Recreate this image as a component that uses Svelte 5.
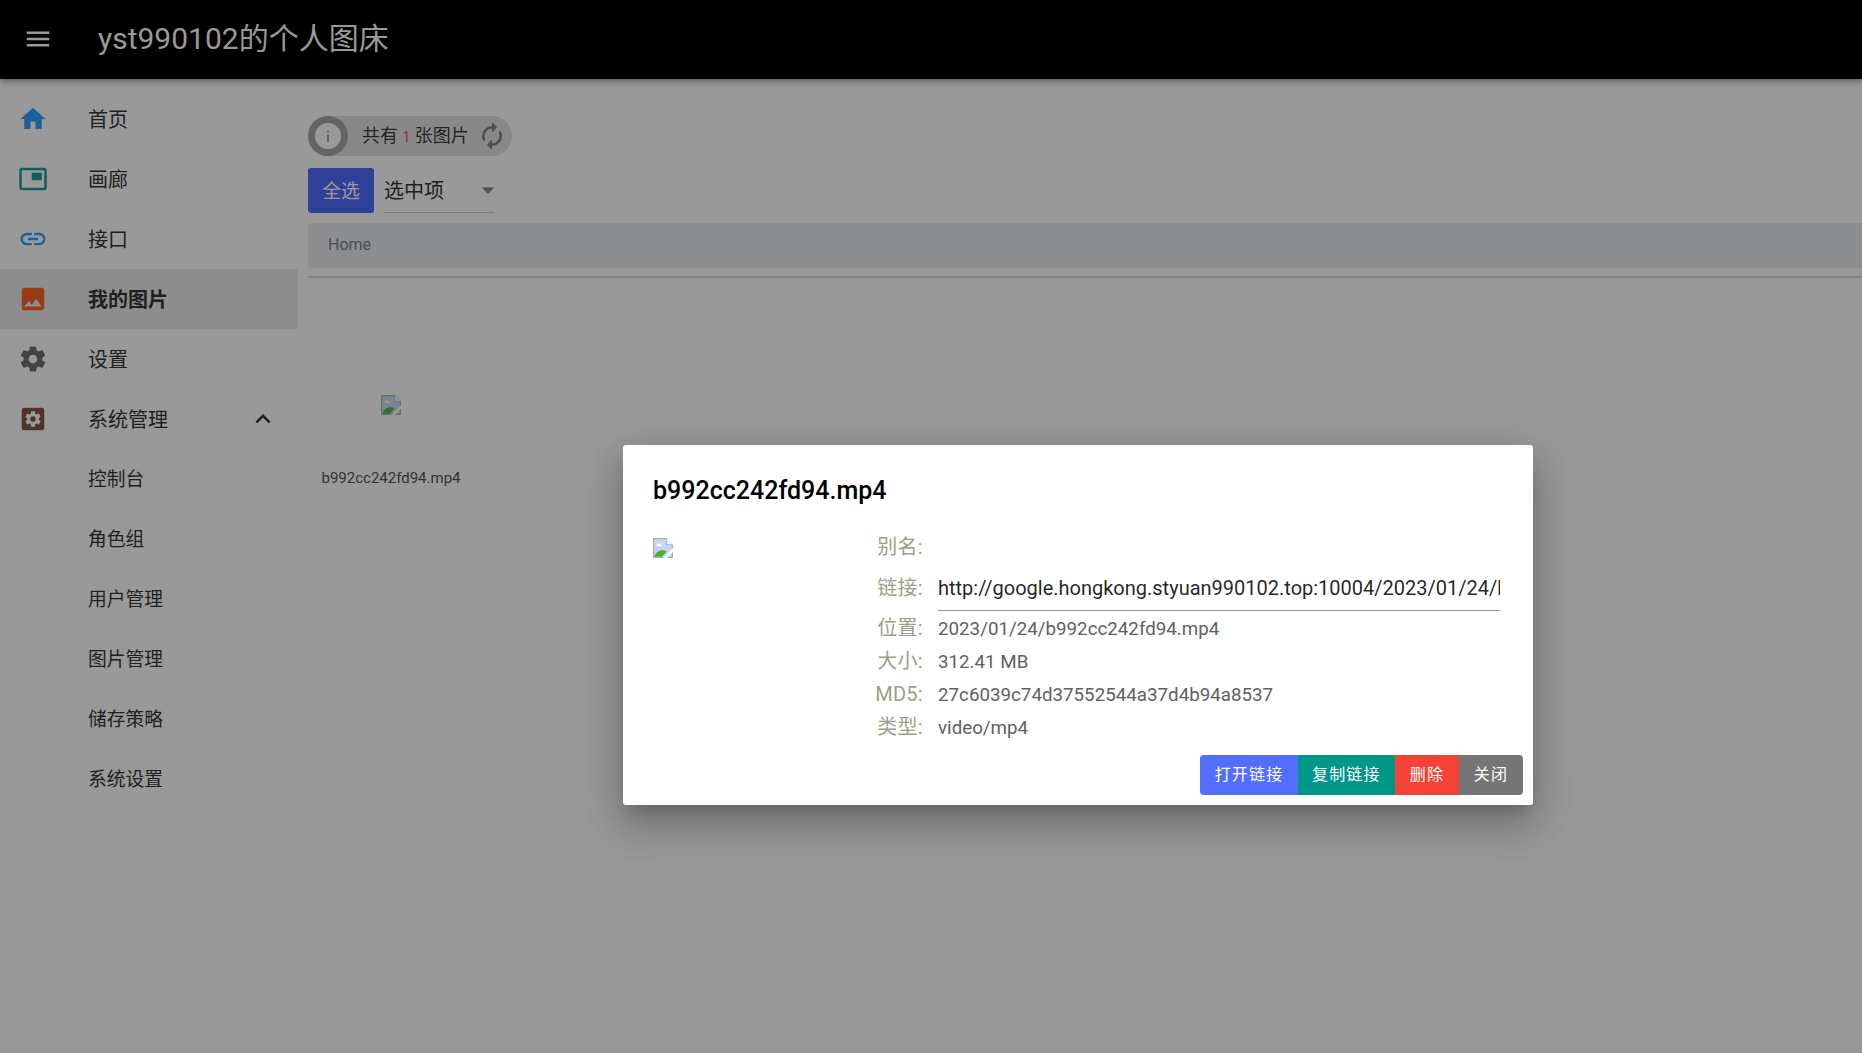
<script>
  const cog = "M12,15.5A3.5,3.5 0 0,1 8.5,12A3.5,3.5 0 0,1 12,8.5A3.5,3.5 0 0,1 15.5,12A3.5,3.5 0 0,1 12,15.5M19.43,12.97C19.47,12.65 19.5,12.33 19.5,12C19.5,11.67 19.47,11.34 19.43,11L21.54,9.37C21.73,9.22 21.78,8.95 21.66,8.73L19.66,5.27C19.54,5.05 19.27,4.96 19.05,5.05L16.56,6.05C16.04,5.66 15.5,5.32 14.87,5.07L14.5,2.42C14.46,2.18 14.25,2 14,2H10C9.75,2 9.54,2.18 9.5,2.42L9.13,5.07C8.5,5.32 7.96,5.66 7.44,6.05L4.95,5.05C4.73,4.96 4.46,5.05 4.34,5.27L2.34,8.73C2.21,8.95 2.27,9.22 2.46,9.37L4.57,11C4.53,11.34 4.5,11.67 4.5,12C4.5,12.33 4.53,12.65 4.57,12.97L2.46,14.63C2.27,14.78 2.21,15.05 2.34,15.27L4.34,18.73C4.46,18.95 4.73,19.03 4.95,18.95L7.44,17.94C7.96,18.34 8.5,18.68 9.13,18.93L9.5,21.58C9.54,21.82 9.75,22 10,22H14C14.25,22 14.46,21.82 14.5,21.58L14.87,18.93C15.5,18.67 16.04,18.34 16.56,17.94L19.05,18.95C19.27,19.03 19.54,18.95 19.66,18.73L21.66,15.27C21.78,15.05 21.73,14.78 21.54,14.63L19.43,12.97Z";
  const menu = [
    { label: "首页", color: "#1a96ff", d: "M10,20V14H14V20H19V12H22L12,3L2,12H5V20H10Z" },
    { label: "画廊", color: "#009688", d: "M19 7h-8v6h8V7zm2-4H3c-1.1 0-2 .9-2 2v14c0 1.1.9 1.98 2 1.98h18c1.1 0 2-.88 2-1.98V5c0-1.1-.9-2-2-2zm0 16.01H3V4.98h18v14.03z" },
    { label: "接口", color: "#1a96ff", d: "M3.9,12C3.9,10.29 5.29,8.9 7,8.9H11V7H7A5,5 0 0,0 2,12A5,5 0 0,0 7,17H11V15.1H7C5.29,15.1 3.9,13.71 3.9,12M8,13H16V11H8V13M17,7H13V8.9H17C18.71,8.9 20.1,10.29 20.1,12C20.1,13.71 18.71,15.1 17,15.1H13V17H17A5,5 0 0,0 22,12A5,5 0 0,0 17,7Z" },
    { label: "我的图片", color: "#ff5210", active: true, d: "M8.5,13.5L11,16.5L14.5,12L19,18H5M21,19V5C21,3.89 20.1,3 19,3H5A2,2 0 0,0 3,5V19A2,2 0 0,0 5,21H19A2,2 0 0,0 21,19Z" },
    { label: "设置", color: "#616161", d: cog }
  ];
  const subs = ["控制台", "角色组", "用户管理", "图片管理", "储存策略", "系统设置"];
  const rows = [
    ["位置", "2023/01/24/b992cc242fd94.mp4"],
    ["大小", "312.41 MB"],
    ["MD5", "27c6039c74d37552544a37d4b94a8537"],
    ["类型", "video/mp4"]
  ];
  const url = "http://google.hongkong.styuan990102.top:10004/2023/01/24/b992cc242fd94.mp4";
</script>

{#snippet broken()}
  <svg class="broken" viewBox="0 0 16 16" width="20" height="20" aria-hidden="true">
    <path d="M0 0H11L16 5V16H0Z" fill="#a9adb5" />
    <path d="M1 1H10.5V5.5H15V15H1Z" fill="#c5d6f4" />
    <path d="M3 5.5c.6-1.2 2.4-1.4 3.2-.4 1 0 1.4.8 1 1.2H3z" fill="#fff" />
    <path d="M1 15c1-3.4 4-5.4 7-5.2 1.4.1 2.2.4 3 .9L7 15z" fill="#4caf2f" />
    <path d="M16 8L8 16H11L16 11Z" fill="#fff" />
    <path d="M11 0L16 5H11Z" fill="#eef1f6" />
  </svg>
{/snippet}

<div class="page">
  <header class="bar">
    <svg class="bar-menu" viewBox="0 0 24 24" width="30" height="30" aria-hidden="true"><path fill="#999" d="M3,6H21V8H3V6M3,11H21V13H3V11M3,16H21V18H3V16Z" /></svg>
    <div class="bar-title">yst990102的个人图床</div>
  </header>

  <div class="shell">
    <nav class="nav">
      {#each menu as m}
        <div class="item" class:active={m.active}>
          <svg viewBox="0 0 24 24" width="30" height="30" aria-hidden="true"><path fill={m.color} d={m.d} /></svg>
          <span>{m.label}</span>
        </div>
      {/each}
      <div class="item">
        <svg viewBox="0 0 24 24" width="30" height="30" aria-hidden="true">
          <rect x="3" y="3" width="18" height="18" rx="2" fill="#7a4037" />
          <path fill="#fff" transform="translate(12 12) scale(.62) translate(-12 -12)" d={cog} />
        </svg>
        <span>系统管理</span>
        <svg class="chev" viewBox="0 0 24 24" width="30" height="30" aria-hidden="true"><path fill="#212121" d="M7.41,15.41L12,10.83L16.59,15.41L18,14L12,8L6,14L7.41,15.41Z" /></svg>
      </div>
      <div class="subs">
        {#each subs as s}
          <div class="item sub"><span>{s}</span></div>
        {/each}
      </div>
    </nav>

    <main class="main">
      <div class="chip">
        <span class="avatar">
          <svg viewBox="0 0 26 26" width="26" height="26" aria-hidden="true">
            <circle cx="13" cy="13" r="13" fill="#fff" />
            <rect x="12" y="11.5" width="2" height="7.5" fill="#9e9e9e" />
            <rect x="12" y="7.6" width="2" height="2" fill="#9e9e9e" />
          </svg>
        </span>
        <span class="chip-text">共有 <em>1</em> 张图片</span>
        <svg class="sync" viewBox="0 0 24 24" width="30" height="30" aria-hidden="true"><path fill="#757575" d="M12,6V9L16,5L12,1V4A8,8 0 0,0 4,12C4,13.57 4.46,15.03 5.24,16.26L6.7,14.8C6.25,13.97 6,13 6,12A6,6 0 0,1 12,6M18.76,7.74L17.3,9.2C17.74,10.04 18,11 18,12A6,6 0 0,1 12,18V15L8,19L12,23V20A8,8 0 0,0 20,12C20,10.43 19.54,8.97 18.76,7.74Z" /></svg>
      </div>

      <div class="actions-row">
        <button class="all">全选</button>
        <div class="select">
          <span>选中项</span>
          <svg viewBox="0 0 24 24" width="30" height="30" aria-hidden="true"><path fill="#757575" d="M7,10L12,15L17,10H7Z" /></svg>
        </div>
      </div>

      <div class="crumb">Home</div>
      <div class="rule"></div>

      <div class="file">
        <div class="thumb">{@render broken()}</div>
        <div class="fname">b992cc242fd94.mp4</div>
      </div>
    </main>
  </div>

  <div class="overlay"></div>

  <div class="dialog">
    <div class="d-title">b992cc242fd94.mp4</div>
    <div class="d-body">
      <div class="d-image">{@render broken()}</div>
      <div class="d-info">
        <div class="row first"><span class="lab">别名:</span><span class="val"></span></div>
        <div class="row link">
          <span class="lab">链接:</span>
          <input class="url" readonly value={url} />
        </div>
        {#each rows as r}
          <div class="row"><span class="lab">{r[0]}:</span><span class="val">{r[1]}</span></div>
        {/each}
      </div>
    </div>
    <div class="d-actions">
      <button class="b-open">打开链接</button>
      <button class="b-copy">复制链接</button>
      <button class="b-del">删除</button>
      <button class="b-close">关闭</button>
    </div>
  </div>
</div>

<style>
  :global(body) {
    margin: 0;
    background: #fff;
  }
  .page {
    position: relative;
    width: 1862px;
    height: 1053px;
    overflow: hidden;
    background: #fff;
    font-family: Roboto, "Noto Sans CJK SC", sans-serif;
    color: rgba(0, 0, 0, 0.87);
  }
  .bar {
    position: relative;
    z-index: 5;
    height: 79px;
    background: #000;
    display: flex;
    align-items: center;
    box-sizing: border-box;
    padding-left: 23px;
    box-shadow: 0 2px 4px -1px rgba(0, 0, 0, 0.2), 0 4px 5px 0 rgba(0, 0, 0, 0.14), 0 1px 10px 0 rgba(0, 0, 0, 0.12);
  }
  .bar-menu {
    margin-bottom: 2px;
  }
  .bar-title {
    margin-left: 45px;
    margin-bottom: 2px;
    color: #999;
    font-size: 30px;
    line-height: 40px;
    white-space: nowrap;
  }
  .shell {
    display: flex;
  }
  .nav {
    width: 298px;
    flex: none;
    padding-top: 10px;
  }
  .item {
    display: flex;
    align-items: center;
    height: 60px;
    padding-left: 18px;
    font-size: 20px;
    position: relative;
    color: #212121;
  }
  .item span {
    margin-left: 40px;
    padding-bottom: 2px;
  }
  .item.active {
    background: #e9e9e9;
    font-weight: 700;
  }
  .chev {
    margin-left: auto;
    margin-right: 20px;
  }
  .subs {
    margin-top: -1px;
  }
  .sub {
    padding-left: 88px;
    font-size: 18.75px;
  }
  .sub span {
    margin-left: 0;
    padding-bottom: 2px;
  }
  .main {
    flex: 1;
    min-width: 0;
    padding: 37px 0 0 10px;
  }
  .chip {
    display: flex;
    align-items: center;
    width: 204px;
    height: 40px;
    border-radius: 20px;
    background: #e0e0e0;
    position: relative;
  }
  .avatar {
    width: 40px;
    height: 40px;
    border-radius: 50%;
    background: #9e9e9e;
    display: flex;
    align-items: center;
    justify-content: center;
    flex: none;
  }
  .chip-text {
    margin-left: 14px;
    padding-bottom: 4px;
    font-size: 18px;
    white-space: pre;
  }
  .chip-text em {
    font-style: normal;
    color: #f44336;
    font-size: 14px;
  }
  .sync {
    position: absolute;
    right: 5px;
    top: 5px;
  }
  .actions-row {
    display: flex;
    margin-top: 12px;
    height: 45px;
  }
  .all {
    width: 66px;
    height: 45px;
    border: 0;
    border-radius: 3px;
    background: #3d5afe;
    color: #fff;
    font: inherit;
    font-size: 18.75px;
    padding: 0 0 2px;
  }
  .select {
    margin-left: 10px;
    width: 110px;
    display: flex;
    align-items: center;
    justify-content: space-between;
    border-bottom: 1px solid #c4c4c4;
    box-sizing: border-box;
    font-size: 20px;
    color: #212121;
  }
  .select span {
    padding-bottom: 2px;
  }
  .select svg {
    margin-right: -9px;
  }
  .crumb {
    margin-top: 10px;
    height: 45px;
    box-sizing: border-box;
    padding: 0 0 2px 20px;
    display: flex;
    align-items: center;
    background: #e7ebee;
    border-radius: 4px 0 0 4px;
    font-size: 16px;
    color: #6c757d;
  }
  .rule {
    margin-top: 8px;
    height: 2px;
    background: #d4d4d4;
  }
  .file {
    width: 166px;
    text-align: center;
  }
  .thumb {
    padding-top: 117px;
    height: 20px;
    line-height: 0;
  }
  .fname {
    margin-top: 52px;
    font-size: 15px;
    line-height: 22px;
    color: #424242;
    white-space: nowrap;
  }
  .overlay {
    position: absolute;
    inset: 0;
    z-index: 3;
    background: rgba(33, 33, 33, 0.46);
  }
  .dialog {
    position: absolute;
    z-index: 6;
    left: 623px;
    top: 445px;
    width: 910px;
    height: 360px;
    box-sizing: border-box;
    background: #fff;
    border-radius: 3px;
    box-shadow: 0 11px 15px -7px rgba(0, 0, 0, 0.2), 0 24px 38px 3px rgba(0, 0, 0, 0.14), 0 9px 46px 8px rgba(0, 0, 0, 0.12);
    padding-top: 30px;
  }
  .d-title {
    padding-left: 30px;
    font-size: 25px;
    font-weight: 500;
    line-height: 32px;
    color: #000;
  }
  .d-body {
    display: flex;
    margin-top: 23px;
  }
  .d-image {
    width: 223px;
    padding: 8px 0 0 30px;
    box-sizing: border-box;
    line-height: 0;
  }
  .d-info {
    width: 660px;
  }
  .row {
    display: flex;
    align-items: baseline;
    height: 33px;
    line-height: 34px;
    font-size: 18.75px;
  }
  .row.first {
    height: 34px;
    align-items: center;
  }
  .row.link {
    height: 47px;
    align-items: center;
  }
  .lab {
    width: 48px;
    margin-left: 29px;
    margin-right: 15px;
    flex: none;
    text-align: right;
    white-space: nowrap;
    color: #9e9e87;
    font-size: 20px;
    letter-spacing: 0.3px;
  }
  .first .lab {
    padding-bottom: 1px;
  }
  .val {
    color: #616161;
    white-space: nowrap;
  }
  .url {
    width: 562px;
    flex: none;
    height: 47px;
    box-sizing: border-box;
    border: 0;
    border-bottom: 1px solid #949494;
    outline: 0;
    padding: 1px 0 0;
    background: transparent;
    font: inherit;
    font-size: 20px;
    color: rgba(0, 0, 0, 0.87);
  }
  .d-actions {
    position: absolute;
    right: 10px;
    bottom: 10px;
    display: flex;
    height: 40px;
    border-radius: 4px;
    overflow: hidden;
  }
  .d-actions button {
    border: 0;
    height: 40px;
    min-width: 64px;
    padding: 0 14.25px 4px;
    color: #fff;
    font: inherit;
    font-size: 16px;
    letter-spacing: 1.2px;
  }
  .b-open { background: #536dfe; }
  .b-copy { background: #009688; }
  .b-del { background: #f44336; }
  .b-close { background: #757575; }
</style>
